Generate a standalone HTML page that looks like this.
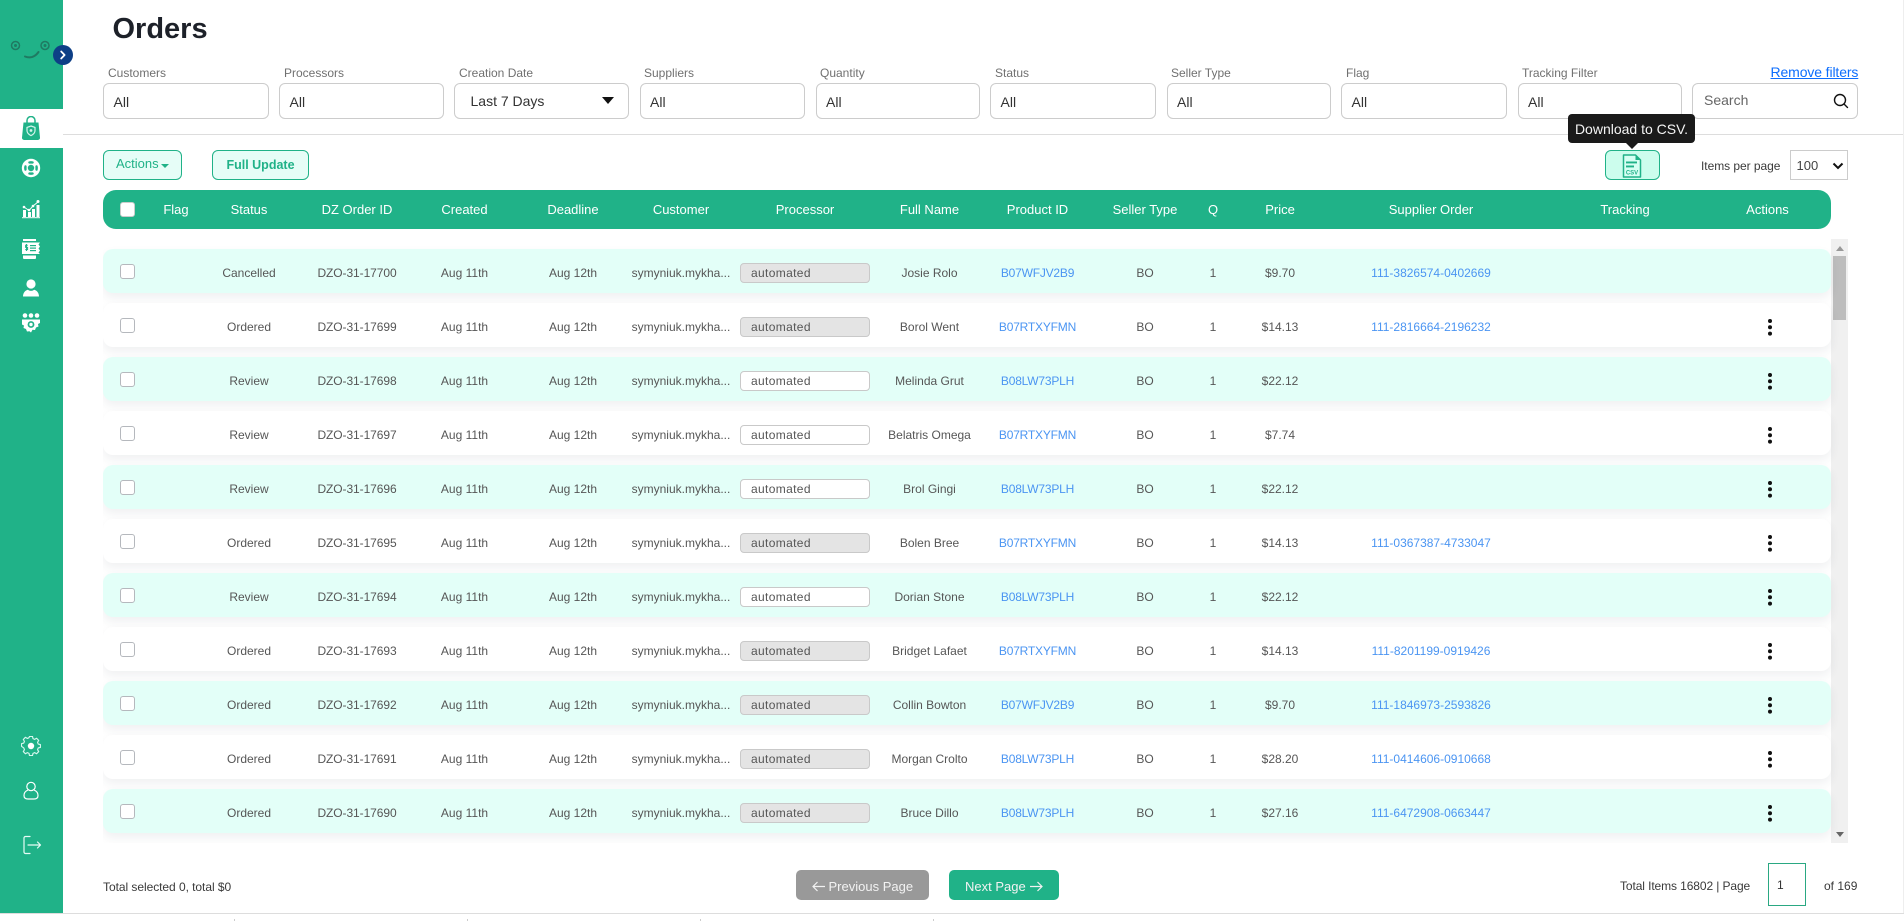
<!DOCTYPE html>
<html lang="en"><head><meta charset="utf-8"><title>Orders</title>
<style>
*{box-sizing:border-box}
html,body{margin:0;padding:0;width:1904px;height:921px;overflow:hidden;background:#fff;font-family:"Liberation Sans",sans-serif;color:#444}
.a{position:absolute}
#side{left:0;top:0;width:63px;height:913px;background:#20b288}
#act{left:0;top:109px;width:63px;height:39px;background:#fff}
.lbl{position:absolute;top:65px;font-size:12px;line-height:16px;color:#707070}
.inp{position:absolute;top:83px;height:36px;border:1.5px solid #ccc;border-radius:6px;background:#fff;font-size:14px;line-height:36px;padding-left:9.5px;color:#333}
.btn{position:absolute;top:150px;height:30px;border:1.5px solid #20b288;border-radius:6px;background:#e6fdf7;color:#20b288;font-size:13px;line-height:27px;text-align:center}
#head{left:103px;top:190px;width:1728px;height:39px;background:#20b288;border-radius:13px}
.h{position:absolute;top:190px;width:160px;margin-left:-80px;text-align:center;color:#fff;font-size:13px;line-height:40px;white-space:nowrap}
.cb{position:absolute;width:15px;height:15px;border:1.5px solid #b5b8bd;border-radius:3px;background:#fff}
#scroll{left:103px;top:239px;width:1745px;height:604px;overflow:hidden}
.r{position:absolute;left:0;width:1728px;height:44px;border-radius:10px;background:#fff;box-shadow:0 5px 10px rgba(40,50,70,.07)}
.g{background:#e3fff8}
.r span{position:absolute;top:0;width:180px;margin-left:-90px;text-align:center;font-size:12px;line-height:48px;white-space:nowrap;color:#565656}
.r .cb{left:17px;top:15px}
.r span.l{color:#4b95f2}
.s{left:146px}.d{left:254px;letter-spacing:-.08px}.t{left:361.5px}.e{left:470px}.u{left:578px}.n{left:826.5px}.p{left:934.5px;letter-spacing:-.2px}.b{left:1042px}.q{left:1110px}.m{left:1177px}.o{left:1328px}
.r i{position:absolute;left:637px;top:14px;width:130px;height:20px;border:1px solid #c9c9c9;border-radius:4px;background:#e4e4e4;font:12px/19px "Liberation Sans",sans-serif;letter-spacing:.35px;padding-left:10px;color:#555}
.r i.w{background:#fff}
.k{position:absolute;left:1665px;top:15.5px;width:4px;height:16px}
.k:before{content:"";position:absolute;left:0;top:0;width:4px;height:4px;border-radius:50%;background:#111;box-shadow:0 6.3px 0 #111,0 12.6px 0 #111}
#bar{left:1831px;top:239px;width:17px;height:604px;background:#f0f0f0}
#thumb{left:1833px;top:256px;width:13px;height:64px;background:#bdbdbd}
.tri{position:absolute;width:0;height:0;border-left:4px solid transparent;border-right:4px solid transparent}
.tx{position:absolute;font-size:12px;line-height:16px;color:#3a3a3a;white-space:nowrap}
.pg{position:absolute;top:870px;height:30px;border-radius:5px}
.pt{position:absolute;top:878px;color:#f2f2f2;font-size:13px;line-height:18px;white-space:nowrap}
.tick{position:absolute;top:919px;width:1px;height:2px;background:#ccc}
</style></head><body>

<div class="a" id="side"></div>
<div class="a" id="act"></div>
<div class="a" style="left:63px;top:134px;width:1841px;height:1px;background:#ddd"></div>
<div class="a" style="left:0;top:913px;width:1904px;height:1px;background:#ddd"></div>
<div class="a" style="left:1903px;top:0;width:1px;height:913px;background:#eee"></div>
<div class="tick" style="left:234px"></div><div class="tick" style="left:467px"></div><div class="tick" style="left:700px"></div><div class="tick" style="left:933px"></div>

<!-- logo -->
<svg class="a" style="left:0;top:30px" width="63" height="40" viewBox="0 0 63 40" fill="none">
<circle cx="15.5" cy="15.5" r="4" stroke="#1f7a62" stroke-width="1.5"/><circle cx="15.5" cy="15.5" r="1.5" fill="#1f7a62"/>
<circle cx="45" cy="15.5" r="4" stroke="#1f7a62" stroke-width="1.5"/><circle cx="45" cy="15.5" r="1.5" fill="#1f7a62"/>
<path d="M25 26.500C30 28.500 35 27 38.500 22" stroke="#1f7a62" stroke-width="2" stroke-linecap="round"/>
</svg>
<svg class="a" style="left:53px;top:45px" width="20" height="20" viewBox="0 0 20 20"><circle cx="10" cy="10" r="10" fill="#0d3f86"/><path d="M8.2 6.500L11.600 10L8.200 13.500" fill="none" stroke="#fff" stroke-width="1.800" stroke-linecap="round" stroke-linejoin="round"/></svg>

<!-- nav icons -->
<svg class="a" style="left:21px;top:116px" width="20" height="25" viewBox="0 0 20 25">
<path d="M6 7V4.500a4 4 0 0 1 8 0V7" fill="none" stroke="#20b288" stroke-width="1.500"/>
<path d="M2.500 6.500h15L19 21.500a2.200 2.200 0 0 1-2.200 2.500H3.200A2.200 2.200 0 0 1 1 21.500z" fill="#20b288"/>
<path d="M10 10l4 1.400v3.200c0 2.400-2 4-4 5-2-1-4-2.600-4-5v-3.200z" fill="none" stroke="#d5f5ec" stroke-width="1.200"/><circle cx="10" cy="14.500" r="1.400" fill="#d5f5ec"/>
</svg>
<svg class="a" style="left:21px;top:158px" width="20" height="20" viewBox="0 0 20 20">
<circle cx="10" cy="10" r="9.200" fill="#fff"/><circle cx="10" cy="10" r="3.200" fill="#20b288"/>
<path d="M3.600 7.500a1.300 1.300 0 0 1 2 .6v3.800a1.300 1.300 0 0 1-2 .6 7 7 0 0 1 0-5zM16.400 7.500a1.300 1.300 0 0 0-2 .6v3.800a1.300 1.300 0 0 0 2 .6 7 7 0 0 0 0-5zM7.500 3.600a1.300 1.300 0 0 0 .6 2h3.800a1.300 1.300 0 0 0 .6-2 7 7 0 0 0-5 0zM7.500 16.400a1.300 1.300 0 0 1 .6-2h3.800a1.300 1.300 0 0 1 .6 2 7 7 0 0 1-5 0z" fill="#20b288"/>
</svg>
<svg class="a" style="left:21px;top:199px" width="20" height="20" viewBox="0 0 20 20" fill="#fff">
<rect x="2" y="11" width="3" height="7"/><rect x="7" y="13" width="3" height="5"/><rect x="11" y="10" width="3" height="8"/><rect x="15.500" y="6" width="3" height="12"/><rect x="1" y="18.200" width="18" height="1"/>
<path d="M3 8l5 3.500L12 7l5-4" fill="none" stroke="#fff" stroke-width="1"/><circle cx="3" cy="8" r="1.300"/><circle cx="8" cy="11" r="1.300"/><circle cx="12" cy="7" r="1.300"/><circle cx="17" cy="2.500" r="1.500"/>
</svg>
<svg class="a" style="left:21px;top:239px" width="20" height="20" viewBox="0 0 20 20" fill="#fff">
<path d="M2 0h13v2H2zM2 16.500h13V19a1 1 0 0 1-1 1H3a1 1 0 0 1-1-1z"/>
<path d="M1 3.500h18l-1.500 2 1.500 2-1.500 2 1.500 2-1.500 2 1.500 1.500H1z"/>
<rect x="9" y="6" width="6" height="1.200" fill="#20b288"/><rect x="9" y="8.500" width="6" height="1.200" fill="#20b288"/><rect x="9" y="11" width="6" height="1.200" fill="#20b288"/>
<path d="M6.800 6.200H4.600v2.200h2v2.200H4.200M5.500 5v7" fill="none" stroke="#20b288" stroke-width="1"/>
</svg>
<svg class="a" style="left:22px;top:279px" width="18" height="18" viewBox="0 0 18 18" fill="#fff"><circle cx="9" cy="5" r="4.600"/><path d="M1 17.500c0-3.500 2-6.200 4.800-6.800a5 5 0 0 0 6.400 0c2.800.6 4.800 3.300 4.800 6.800z"/></svg>
<svg class="a" style="left:21px;top:313px" width="20" height="20" viewBox="0 0 20 20" fill="#fff">
<circle cx="4" cy="2.500" r="2.300"/><circle cx="10" cy="2.500" r="2.300"/><circle cx="16" cy="2.500" r="2.300"/>
<path d="M1 6.500h18v3.500l-2 1 .5 2.500-2.500 1-1 2.500-2.500-.3L10 19.500l-1.500-1.300-2.500.3-1-2.500-2.500-1 .5-2.500-2-1z"/>
<circle cx="10" cy="11.500" r="3.400" fill="#20b288"/><circle cx="10" cy="11.500" r="1.700"/>
</svg>
<svg class="a" style="left:21px;top:736px" width="20" height="20" viewBox="0 0 20 20">
<path d="M8.400 1h3.200l.5 2.300 1.700.8 2.100-1.200 2.200 2.300-1.200 2 .7 1.800 2.300.5v3.100l-2.300.5-.7 1.800 1.200 2-2.200 2.300-2.100-1.200-1.700.8-.5 2.300H8.400l-.5-2.300-1.700-.8-2.100 1.200-2.200-2.300 1.200-2-.7-1.800L0 11.400V8.600l2.400-.6.700-1.800-1.200-2 2.200-2.300 2.100 1.200 1.700-.8z" transform="translate(.5 -.5) scale(.95)" fill="none" stroke="#d9f7ef" stroke-width="1.200" stroke-linejoin="round"/>
<circle cx="10" cy="10" r="3.200" fill="#fff"/></svg>
<svg class="a" style="left:23px;top:781px" width="16" height="19" viewBox="0 0 16 19" fill="none" stroke="#fff" stroke-width="1.200"><circle cx="8" cy="5.500" r="4.200"/><path d="M5 9C2.500 10 1 12 1 14.500 1 17 2.500 18 5 18h6c2.500 0 4-1 4-3.500C15 12 13.500 10 11 9"/></svg>
<svg class="a" style="left:22px;top:835px" width="20" height="20" viewBox="0 0 20 20" fill="none" stroke="#e6fbf5" stroke-width="1.200" stroke-linecap="round" stroke-linejoin="round"><path d="M8 1.500H3.500A1.500 1.500 0 0 0 2 3v14a1.500 1.500 0 0 0 1.500 1.500H8"/><path d="M6 10h12.500M15.500 7l3 3-3 3"/></svg>

<!-- title -->
<div class="a" style="left:112.500px;top:11px;font-size:29px;line-height:36px;font-weight:bold;color:#1d2129">Orders</div>

<!-- filters -->
<div class="lbl" style="left:108px">Customers</div>
<div class="lbl" style="left:284px">Processors</div>
<div class="lbl" style="left:459px">Creation Date</div>
<div class="lbl" style="left:644px">Suppliers</div>
<div class="lbl" style="left:820px">Quantity</div>
<div class="lbl" style="left:995px">Status</div>
<div class="lbl" style="left:1171px">Seller Type</div>
<div class="lbl" style="left:1346px">Flag</div>
<div class="lbl" style="left:1522px">Tracking Filter</div>
<div class="a" style="left:1770.500px;top:63px;font-size:14px;line-height:18px;color:#0d6efd;text-decoration:underline;letter-spacing:-.12px">Remove filters</div>

<div class="inp" style="left:103px;width:166px">All</div>
<div class="inp" style="left:279px;width:165px">All</div>
<div class="inp" style="left:454px;width:175px;padding-left:15.500px;line-height:34px">Last 7 Days</div>
<div class="tri" style="left:602px;top:97px;border-left-width:6px;border-right-width:6px;border-top:7px solid #111"></div>
<div class="inp" style="left:639.500px;width:165px">All</div>
<div class="inp" style="left:815.500px;width:164.500px">All</div>
<div class="inp" style="left:990px;width:165.500px">All</div>
<div class="inp" style="left:1166.500px;width:164.500px">All</div>
<div class="inp" style="left:1341px;width:165.500px">All</div>
<div class="inp" style="left:1517.500px;width:164px">All</div>
<div class="inp" style="left:1692px;width:165.500px;color:#666;line-height:33px;padding-left:11px">Search</div>
<svg class="a" style="left:1833px;top:93px" width="16" height="16" viewBox="0 0 16 16" fill="none" stroke="#111" stroke-width="1.400"><circle cx="7" cy="7" r="5.500"/><path d="M11 11l3.500 3.500" stroke-linecap="round"/></svg>

<!-- toolbar -->
<div class="btn" style="left:103px;width:79px;text-align:left;padding-left:12px;line-height:25px">Actions</div>
<div class="tri" style="left:161px;top:164px;border-top:4px solid #20b288"></div>
<div class="btn" style="left:212px;width:97px;font-weight:bold;font-size:12.500px;line-height:28px">Full Update</div>

<div class="btn" style="left:1605px;width:55px;background:#ccfded"></div>
<svg class="a" style="left:1620px;top:154px" width="24" height="24" viewBox="0 0 24 24">
<path d="M3.500 1h12l5 5v17h-17z" fill="#d6fff3" stroke="#20b288" stroke-width="1.500" stroke-linejoin="round"/><path d="M15.500 1v5h5z" fill="#20b288"/>
<rect x="6" y="7.500" width="11" height="1.900" fill="#20b288"/><rect x="6" y="11.500" width="8" height="1.900" fill="#20b288"/>
<text x="12" y="20.500" text-anchor="middle" font-family="Liberation Sans,sans-serif" font-size="6" font-weight="bold" fill="#20b288">CSV</text></svg>
<div class="a" style="left:1568px;top:114px;width:127px;height:29px;background:#1a1a1a;border-radius:4px;color:#f5f5f5;font-size:14px;line-height:30px;text-align:center;white-space:nowrap">Download to CSV.</div>
<div class="tri" style="left:1625.500px;top:143px;border-left-width:6px;border-right-width:6px;border-top:6px solid #1a1a1a"></div>

<div class="tx" style="left:1701px;top:158px;letter-spacing:-.05px">Items per page</div>
<div class="a" style="left:1790px;top:150px;width:58px;height:30px;border:1px solid #ccc;font-size:13px;line-height:29px;padding-left:5.500px;color:#444">100</div>
<svg class="a" style="left:1832px;top:162px" width="12" height="8" viewBox="0 0 12 8"><path d="M1.500 1.500L6 6l4.500-4.500" fill="none" stroke="#111" stroke-width="2"/></svg>

<!-- table header -->
<div class="a" id="head"></div>
<div class="cb" style="left:120px;top:202px;border-color:#ccc"></div>
<div class="h" style="left:176px">Flag</div>
<div class="h" style="left:249px">Status</div>
<div class="h" style="left:357px">DZ Order ID</div>
<div class="h" style="left:464.500px">Created</div>
<div class="h" style="left:573px">Deadline</div>
<div class="h" style="left:681px">Customer</div>
<div class="h" style="left:805px">Processor</div>
<div class="h" style="left:929.500px">Full Name</div>
<div class="h" style="left:1037.500px">Product ID</div>
<div class="h" style="left:1145px">Seller Type</div>
<div class="h" style="left:1213px">Q</div>
<div class="h" style="left:1280px">Price</div>
<div class="h" style="left:1431px">Supplier Order</div>
<div class="h" style="left:1625px">Tracking</div>
<div class="h" style="left:1767.500px">Actions</div>

<!-- scrollbar -->
<div class="a" id="bar"></div>
<div class="a" id="thumb"></div>
<div class="tri" style="left:1835.500px;top:246px;border-bottom:5px solid #999"></div>
<div class="tri" style="left:1835.500px;top:832px;border-top:5px solid #666"></div>

<!-- rows -->
<div class="a" id="scroll">
<div class="r g" style="top:10px"><div class="cb"></div><span class="s">Cancelled</span><span class="d">DZO-31-17700</span><span class="t">Aug 11th</span><span class="e">Aug 12th</span><span class="u">symyniuk.mykha...</span><i>automated</i><span class="n">Josie Rolo</span><span class="p l">B07WFJV2B9</span><span class="b">BO</span><span class="q">1</span><span class="m">$9.70</span><span class="o l">111-3826574-0402669</span></div>
<div class="r" style="top:64px"><div class="cb"></div><span class="s">Ordered</span><span class="d">DZO-31-17699</span><span class="t">Aug 11th</span><span class="e">Aug 12th</span><span class="u">symyniuk.mykha...</span><i>automated</i><span class="n">Borol Went</span><span class="p l">B07RTXYFMN</span><span class="b">BO</span><span class="q">1</span><span class="m">$14.13</span><span class="o l">111-2816664-2196232</span><div class="k"></div></div>
<div class="r g" style="top:118px"><div class="cb"></div><span class="s">Review</span><span class="d">DZO-31-17698</span><span class="t">Aug 11th</span><span class="e">Aug 12th</span><span class="u">symyniuk.mykha...</span><i class="w">automated</i><span class="n">Melinda Grut</span><span class="p l">B08LW73PLH</span><span class="b">BO</span><span class="q">1</span><span class="m">$22.12</span><div class="k"></div></div>
<div class="r" style="top:172px"><div class="cb"></div><span class="s">Review</span><span class="d">DZO-31-17697</span><span class="t">Aug 11th</span><span class="e">Aug 12th</span><span class="u">symyniuk.mykha...</span><i class="w">automated</i><span class="n">Belatris Omega</span><span class="p l">B07RTXYFMN</span><span class="b">BO</span><span class="q">1</span><span class="m">$7.74</span><div class="k"></div></div>
<div class="r g" style="top:226px"><div class="cb"></div><span class="s">Review</span><span class="d">DZO-31-17696</span><span class="t">Aug 11th</span><span class="e">Aug 12th</span><span class="u">symyniuk.mykha...</span><i class="w">automated</i><span class="n">Brol Gingi</span><span class="p l">B08LW73PLH</span><span class="b">BO</span><span class="q">1</span><span class="m">$22.12</span><div class="k"></div></div>
<div class="r" style="top:280px"><div class="cb"></div><span class="s">Ordered</span><span class="d">DZO-31-17695</span><span class="t">Aug 11th</span><span class="e">Aug 12th</span><span class="u">symyniuk.mykha...</span><i>automated</i><span class="n">Bolen Bree</span><span class="p l">B07RTXYFMN</span><span class="b">BO</span><span class="q">1</span><span class="m">$14.13</span><span class="o l">111-0367387-4733047</span><div class="k"></div></div>
<div class="r g" style="top:334px"><div class="cb"></div><span class="s">Review</span><span class="d">DZO-31-17694</span><span class="t">Aug 11th</span><span class="e">Aug 12th</span><span class="u">symyniuk.mykha...</span><i class="w">automated</i><span class="n">Dorian Stone</span><span class="p l">B08LW73PLH</span><span class="b">BO</span><span class="q">1</span><span class="m">$22.12</span><div class="k"></div></div>
<div class="r" style="top:388px"><div class="cb"></div><span class="s">Ordered</span><span class="d">DZO-31-17693</span><span class="t">Aug 11th</span><span class="e">Aug 12th</span><span class="u">symyniuk.mykha...</span><i>automated</i><span class="n">Bridget Lafaet</span><span class="p l">B07RTXYFMN</span><span class="b">BO</span><span class="q">1</span><span class="m">$14.13</span><span class="o l">111-8201199-0919426</span><div class="k"></div></div>
<div class="r g" style="top:442px"><div class="cb"></div><span class="s">Ordered</span><span class="d">DZO-31-17692</span><span class="t">Aug 11th</span><span class="e">Aug 12th</span><span class="u">symyniuk.mykha...</span><i>automated</i><span class="n">Collin Bowton</span><span class="p l">B07WFJV2B9</span><span class="b">BO</span><span class="q">1</span><span class="m">$9.70</span><span class="o l">111-1846973-2593826</span><div class="k"></div></div>
<div class="r" style="top:496px"><div class="cb"></div><span class="s">Ordered</span><span class="d">DZO-31-17691</span><span class="t">Aug 11th</span><span class="e">Aug 12th</span><span class="u">symyniuk.mykha...</span><i>automated</i><span class="n">Morgan Crolto</span><span class="p l">B08LW73PLH</span><span class="b">BO</span><span class="q">1</span><span class="m">$28.20</span><span class="o l">111-0414606-0910668</span><div class="k"></div></div>
<div class="r g" style="top:550px"><div class="cb"></div><span class="s">Ordered</span><span class="d">DZO-31-17690</span><span class="t">Aug 11th</span><span class="e">Aug 12th</span><span class="u">symyniuk.mykha...</span><i>automated</i><span class="n">Bruce Dillo</span><span class="p l">B08LW73PLH</span><span class="b">BO</span><span class="q">1</span><span class="m">$27.16</span><span class="o l">111-6472908-0663447</span><div class="k"></div></div>
</div>

<!-- footer -->
<div class="tx" style="left:103px;top:879px;letter-spacing:-.05px">Total selected 0, total $0</div>
<div class="pg" style="left:796px;width:133px;background:#999"></div>
<svg class="a" style="left:811px;top:880px" width="15" height="13" viewBox="0 0 15 13" fill="none" stroke="#f2f2f2" stroke-width="1.200"><path d="M14 6.500H2M6.500 2L2 6.500 6.500 11"/></svg>
<div class="pt" style="left:828.500px">Previous Page</div>
<div class="pg" style="left:949px;width:110px;background:#20b288"></div>
<div class="pt" style="left:965px">Next Page</div>
<svg class="a" style="left:1029px;top:880px" width="15" height="13" viewBox="0 0 15 13" fill="none" stroke="#f2f2f2" stroke-width="1.200"><path d="M1 6.500h12M8.500 2l4.500 4.500L8.500 11"/></svg>
<div class="tx" style="left:1620px;top:878px;letter-spacing:-.1px">Total Items 16802 | Page</div>
<div class="a" style="left:1767.500px;top:863px;width:38.500px;height:43px;border:1px solid #2aa882;font-size:12px;line-height:43px;padding-left:8.500px;color:#333">1</div>
<div class="tx" style="left:1824px;top:878px">of 169</div>

</body></html>
